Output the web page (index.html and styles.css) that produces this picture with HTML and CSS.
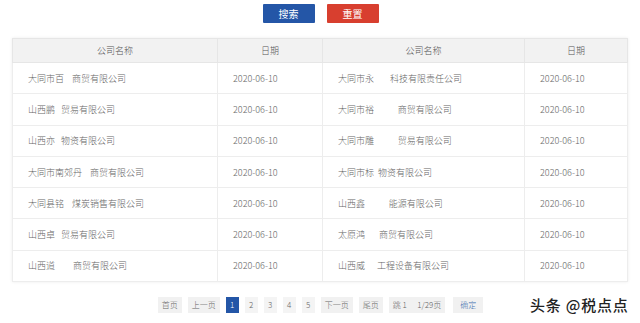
FILE: index.html
```html
<!DOCTYPE html>
<html lang="zh">
<head>
<meta charset="utf-8">
<link rel="stylesheet" href="styles.css">
</head>
<body>
<div class="page">
  <div class="actions">
    <button class="btn btn-blue">搜索</button>
    <button class="btn btn-red">重置</button>
  </div>
  <table class="grid">
    <colgroup>
      <col class="c-name"><col class="c-date"><col class="c-name2"><col class="c-date2">
    </colgroup>
    <thead>
      <tr><th>公司名称</th><th>日期</th><th>公司名称</th><th>日期</th></tr>
    </thead>
    <tbody>
      <tr><td>大同市百&nbsp;&nbsp;&nbsp;&nbsp;商贸有限公司</td><td>2020-06-10</td><td>大同市永&nbsp;&nbsp;&nbsp;&nbsp;&nbsp;&nbsp;&nbsp;&nbsp;科技有限责任公司</td><td>2020-06-10</td></tr>
      <tr><td>山西鹏&nbsp;&nbsp;&nbsp;贸易有限公司</td><td>2020-06-10</td><td>大同市裕&nbsp;&nbsp;&nbsp;&nbsp;&nbsp;&nbsp;&nbsp;&nbsp;&nbsp;&nbsp;&nbsp;&nbsp;商贸有限公司</td><td>2020-06-10</td></tr>
      <tr><td>山西亦&nbsp;&nbsp;&nbsp;物资有限公司</td><td>2020-06-10</td><td>大同市雕&nbsp;&nbsp;&nbsp;&nbsp;&nbsp;&nbsp;&nbsp;&nbsp;&nbsp;&nbsp;&nbsp;&nbsp;贸易有限公司</td><td>2020-06-10</td></tr>
      <tr><td>大同市南郊丹&nbsp;&nbsp;&nbsp;&nbsp;商贸有限公司</td><td>2020-06-10</td><td>大同市标&nbsp;&nbsp;物资有限公司</td><td>2020-06-10</td></tr>
      <tr><td>大同县铭&nbsp;&nbsp;&nbsp;&nbsp;煤炭销售有限公司</td><td>2020-06-10</td><td>山西鑫&nbsp;&nbsp;&nbsp;&nbsp;&nbsp;&nbsp;&nbsp;&nbsp;&nbsp;&nbsp;&nbsp;&nbsp;能源有限公司</td><td>2020-06-10</td></tr>
      <tr><td>山西卓&nbsp;&nbsp;&nbsp;贸易有限公司</td><td>2020-06-10</td><td>太原鸿&nbsp;&nbsp;&nbsp;&nbsp;&nbsp;&nbsp;&nbsp;商贸有限公司</td><td>2020-06-10</td></tr>
      <tr><td>山西道&nbsp;&nbsp;&nbsp;&nbsp;&nbsp;&nbsp;&nbsp;&nbsp;&nbsp;商贸有限公司</td><td>2020-06-10</td><td>山西威&nbsp;&nbsp;&nbsp;&nbsp;&nbsp;&nbsp;工程设备有限公司</td><td>2020-06-10</td></tr>
    </tbody>
  </table>
  <div class="pager">
    <span class="pg">首页</span>
    <span class="pg">上一页</span>
    <span class="pg num active">1</span>
    <span class="pg num">2</span>
    <span class="pg num">3</span>
    <span class="pg num">4</span>
    <span class="pg num">5</span>
    <span class="pg">下一页</span>
    <span class="pg">尾页</span>
    <span class="pg jump">跳 1&nbsp;&nbsp;&nbsp;&nbsp;&nbsp;&nbsp;1/29页</span>
    <span class="pg ok">确定</span>
  </div>
  <div class="mark">头条 @税点点</div>
</div>
</body>
</html>
```

FILE: styles.css
```css
* { box-sizing: border-box; }
html, body { margin: 0; padding: 0; background: #fff; }
body {
  font-family: "Noto Sans CJK SC", "Noto Sans", sans-serif;
  color: #666;
  width: 640px;
  height: 323px;
  overflow: hidden;
}
.page { position: relative; width: 640px; height: 323px; }
.actions {
  display: flex;
  justify-content: center;
  gap: 12px;
  padding-top: 4px;
  padding-left: 1px;
}
.btn {
  width: 52px;
  height: 19px;
  border: 0;
  border-radius: 1px;
  color: #fff;
  font-family: inherit;
  font-size: 10px;
  line-height: 19px;
  padding: 0;
}
.btn-blue { background: #2456a7; }
.btn-red { background: #d83f2f; }

.grid {
  margin: 15px 0 0 12px;
  width: 615px;
  border-collapse: collapse;
  table-layout: fixed;
  font-size: 9px;
  font-weight: 300;
  box-shadow: 0 0 3px rgba(0,0,0,0.08);
}
.c-name { width: 205px; }
.c-date { width: 105px; }
.c-name2 { width: 202px; }
.c-date2 { width: 103px; }
.grid th {
  height: 24px;
  background: #f2f2f2;
  font-weight: 300;
  color: #555;
  border: 1px solid #e6e6e6;
  text-align: center;
  padding: 0;
}
.grid td {
  height: 31.3px;
  border: 1px solid #ededed;
  padding: 0 0 0 15px;
  color: #666;
  white-space: nowrap;
}
.pager {
  display: flex;
  justify-content: center;
  gap: 6px;
  margin-top: 15px;
  padding-left: 1px;
  font-size: 8px;
  font-weight: 300;
}
.pg {
  height: 16px;
  line-height: 16px;
  background: #f1f1f1;
  color: #666;
  text-align: center;
  padding: 0 4px;
}
.num { width: 13px; padding: 0; background: #f4f4f4; }
.active { background: #2456a7; color: #fff; }
.jump { padding: 0 4px; }
.ok { padding: 0 7px; margin-left: 2px; color: #3f6fb0; }
.mark {
  position: absolute;
  left: 530px;
  top: 294px;
  font-size: 15px;
  font-weight: 500;
  color: #222;
  letter-spacing: 0.8px;
  text-shadow: 0 0 2px #fff, 0 0 1px #fff;
}
```
